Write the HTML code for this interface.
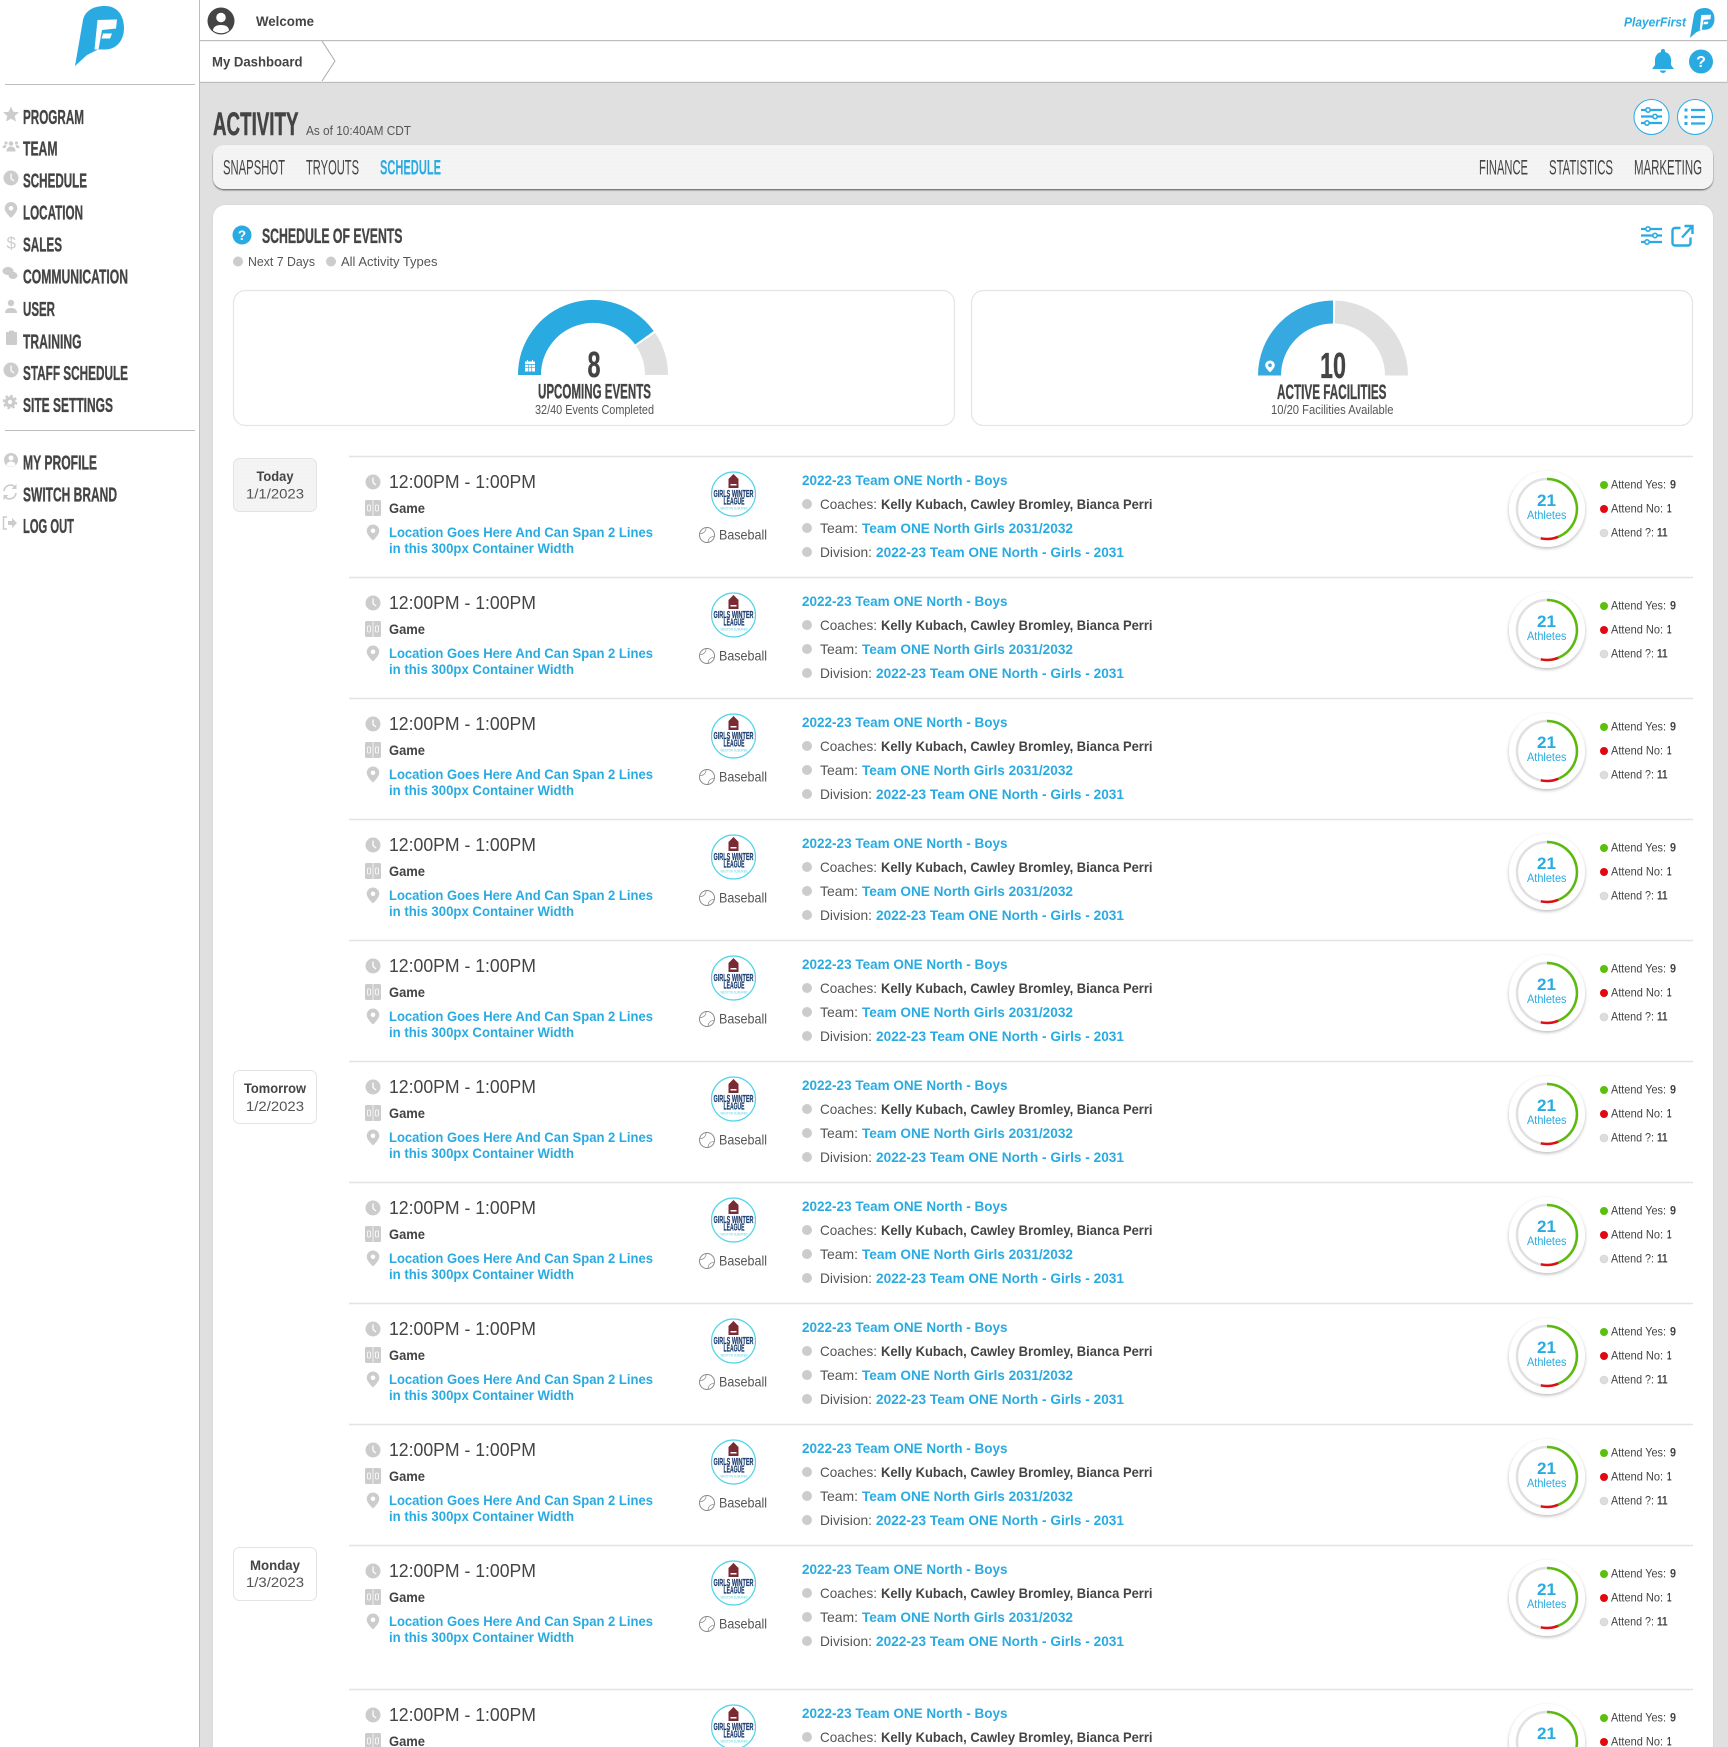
<!DOCTYPE html>
<html lang="en">
<head>
<meta charset="utf-8">
<title>PlayerFirst - Activity Schedule</title>
<style>
html,body{margin:0;padding:0;background:#e0e0e0}
svg{display:block}
text{font-family:"Liberation Sans",Arial,sans-serif;white-space:pre}
.d{font-family:"Liberation Sans Narrow","Liberation Sans",sans-serif;font-weight:700;fill:#444;stroke:#444;stroke-width:.35px}
.s{font-size:20.5px}
.tab{font-family:"Liberation Sans Narrow","Liberation Sans",sans-serif;font-size:21px;fill:#444}
.t{font-size:18.5px;fill:#444}
.g{font-size:14px;font-weight:700;fill:#444}
.l{font-size:14px;font-weight:700;fill:#29abe2}
.r{font-size:14px;fill:#555}
.n{font-size:12.5px;fill:#555}
.a{font-size:12px;fill:#444}
.ab{font-size:12px;font-weight:700;fill:#444}
.lg{font-family:"Liberation Sans Narrow","Liberation Sans",sans-serif;font-weight:700;font-size:10px;fill:#1d3f72;stroke:#1d3f72;stroke-width:.2px}
.lw{font-size:4px;fill:#5cd0e8}
.c{fill:#ccc}
.ln{stroke:#e3e3e3;stroke-width:1.4}
</style>
</head>
<body>
<svg xmlns="http://www.w3.org/2000/svg" width="1728" height="1747" viewBox="0 0 1728 1747">
<defs>
<pattern id="dots" width="4" height="4" patternUnits="userSpaceOnUse"><rect width="4" height="4" fill="#f4f4f4"/><rect x="1" y="1" width="1" height="1" fill="#ececec"/></pattern>
<filter id="sh" x="-20%" y="-20%" width="140%" height="140%"><feDropShadow dx="0" dy="1.5" stdDeviation="1.5" flood-color="#000" flood-opacity=".28"/></filter>
<filter id="tabsh" x="-2%" y="-20%" width="104%" height="150%"><feDropShadow dx="0" dy="1.2" stdDeviation=".8" flood-color="#000" flood-opacity=".55"/></filter>
<g id="logo">
<path fill="#29abe2" d="M75 66L83 20C85 11 93 6 105 6C117 6 124 15 124 28C124 41 116 49.500 105 49.500L98 49.500L87 55Z"/>
<path fill="#fff" d="M97.500 20L117 19.500L116 28.500L102 30L98.500 49.500L94.500 49.500ZM103 33.500L112 33.500L110 38.500L101.500 38.500Z"/>
</g>
<g id="filt" fill="none" stroke="#29abe2" stroke-width="2.200">
<path d="M0 0H21M0 6.500H21M0 13H21"/>
<circle cx="7" cy="0" r="2.200" fill="#fff" stroke-width="1.600"/><circle cx="14" cy="6.500" r="2.200" fill="#fff" stroke-width="1.600"/><circle cx="6" cy="13" r="2.200" fill="#fff" stroke-width="1.600"/>
</g>
<g id="clk"><circle r="7.500" cx="0" cy="0" fill="#ccc"/><path d="M0-4.500V.5L3 3" fill="none" stroke="#fff" stroke-width="1.300"/></g>
<path id="pinp" d="M0-8a6.300 6.300 0 0 0-6.300 6.300C-6.300 2.500 0 8 0 8S6.300 2.500 6.300-1.700A6.300 6.300 0 0 0 0-8ZM0 .6a2.300 2.300 0 1 1 0-4.600 2.300 2.300 0 0 1 0 4.600Z"/>
<g id="r">
<use href="#clk" x="373" y="26"/>
<rect x="365" y="44" width="16" height="16" rx="1.500" fill="#ccc"/><path d="M373 44V60" stroke="#fff" stroke-width=".7"/><rect x="367.500" y="49" width="3" height="6" rx="1" fill="none" stroke="#fff" stroke-width=".8"/><rect x="375.500" y="49" width="3" height="6" rx="1" fill="none" stroke="#fff" stroke-width=".8"/>
<use href="#pinp" x="373" y="76.500" fill="#ccc"/>
<circle cx="733.500" cy="38" r="22" fill="#fff" stroke="#52d4ea" stroke-width="1.200"/>
<path d="M733.500 18l5 5v9h-10v-9z" fill="#7a2a33"/><rect x="730.500" y="28" width="6" height="1.500" fill="#fff"/>
<circle cx="707" cy="79" r="7.500" fill="none" stroke="#888"/><path d="M706 71.700c.3 3-2 5.700-6 6M714 80.300c-3 .3-5.700 2-6 6" fill="none" stroke="#888" stroke-width=".7"/>
<circle cx="807" cy="48" r="5" class="c"/><circle cx="807" cy="72" r="5" class="c"/><circle cx="807" cy="96" r="5" class="c"/>
<circle cx="1547" cy="53" r="38" fill="#fff" filter="url(#sh)"/>
<circle cx="1547" cy="53" r="30" fill="none" stroke="#e0e0e0" stroke-width="2.500"/>
<path d="M1547 23A30 30 0 0 1 1558.200 80.800" fill="none" stroke="#5cb90d" stroke-width="2.500"/>
<path d="M1558.200 80.800A30 30 0 0 1 1540.800 82.300" fill="none" stroke="#e00d12" stroke-width="2.500"/>
<circle cx="1604" cy="29" r="4" fill="#5cbf0a"/><circle cx="1604" cy="53" r="4" fill="#e0090f"/><circle cx="1604" cy="77" r="4" fill="#ddd" stroke="#d0d0d0" stroke-width=".6"/>
</g>
</defs>

<rect width="1728" height="1747" fill="#e0e0e0"/>

<!-- sidebar -->
<rect width="199" height="1747" fill="#fff"/>
<rect x="199" width="1" height="1747" fill="#bdbdbd"/>
<use href="#logo"/>
<rect x="5" y="84" width="190" height="1" fill="#bdbdbd"/>
<rect x="5" y="430" width="190" height="1" fill="#bdbdbd"/>

<polygon class="c" points="11,106.500 13.300,111.700 19,112.300 14.700,116 16,121.500 11,118.700 6,121.500 7.300,116 3,112.300 8.700,111.700"/>
<g class="c"><circle cx="11" cy="143.500" r="2.300"/><path d="M6.500 151.500c0-3.500 2-5 4.500-5s4.500 1.500 4.500 5z"/><circle cx="6" cy="143" r="1.600"/><circle cx="16.500" cy="143" r="1.600"/><path d="M2.500 148c0-2 1.300-3 2.700-3h1.300l-1 3zM19.500 148c0-2-1.300-3-2.700-3h-1.300l1 3z"/></g>
<use href="#clk" x="11" y="178"/>
<use href="#pinp" x="11" y="210" class="c"/>
<text x="6.500" y="248.500" font-size="17" fill="#ccc">$</text>
<g class="c"><ellipse cx="8" cy="271" rx="5.500" ry="4"/><ellipse cx="13" cy="275.500" rx="4.500" ry="3.600"/></g>
<g class="c"><circle cx="11" cy="303" r="3.200"/><path d="M5 313c0-4 3-5 6-5s6 1 6 5z"/></g>
<g class="c"><rect x="6" y="332" width="11" height="13" rx="1"/><rect x="9" y="330.500" width="5" height="3" rx="1"/></g>
<use href="#clk" x="11" y="370"/>
<g fill="none" stroke="#ccc"><circle cx="10" cy="402" r="3.800" stroke-width="3.400"/><circle cx="10" cy="402" r="6.200" stroke-width="2.200" stroke-dasharray="2.500 2.370"/></g>
<circle cx="11" cy="460" r="7" class="c"/><circle cx="11" cy="458" r="2.500" fill="#fff"/><path d="M6.500 465c.5-2.500 2.500-3.500 4.500-3.500s4 1 4.500 3.500c-1 1-2.700 1.800-4.500 1.800s-3.500-.8-4.500-1.800z" fill="#fff"/>
<g fill="none" stroke="#ccc" stroke-width="1.600"><path d="M4 491a6.500 6.500 0 0 1 11-4M16 493a6.500 6.500 0 0 1-11 4"/></g><path class="c" d="M16.500 484v5h-5zM3.500 500v-5h5z"/>
<path d="M7 517h-3.500v12H7" fill="none" stroke="#ccc" stroke-width="1.500"/><path class="c" d="M8 521h4v-3l5 5-5 5v-3H8z"/>

<text class="d s" x="23" y="124" textLength="61" lengthAdjust="spacingAndGlyphs">PROGRAM</text>
<text class="d s" x="23" y="155.500" textLength="34.500" lengthAdjust="spacingAndGlyphs">TEAM</text>
<text class="d s" x="23" y="187.500" textLength="64" lengthAdjust="spacingAndGlyphs">SCHEDULE</text>
<text class="d s" x="23" y="219.500" textLength="60" lengthAdjust="spacingAndGlyphs">LOCATION</text>
<text class="d s" x="23" y="251.500" textLength="39" lengthAdjust="spacingAndGlyphs">SALES</text>
<text class="d s" x="23" y="283.500" textLength="105" lengthAdjust="spacingAndGlyphs">COMMUNICATION</text>
<text class="d s" x="23" y="316" textLength="32" lengthAdjust="spacingAndGlyphs">USER</text>
<text class="d s" x="23" y="348.500" textLength="58.500" lengthAdjust="spacingAndGlyphs">TRAINING</text>
<text class="d s" x="23" y="380" textLength="105" lengthAdjust="spacingAndGlyphs">STAFF SCHEDULE</text>
<text class="d s" x="23" y="412" textLength="90" lengthAdjust="spacingAndGlyphs">SITE SETTINGS</text>
<text class="d s" x="23" y="469.500" textLength="74" lengthAdjust="spacingAndGlyphs">MY PROFILE</text>
<text class="d s" x="23" y="501.500" textLength="94" lengthAdjust="spacingAndGlyphs">SWITCH BRAND</text>
<text class="d s" x="23" y="533" textLength="51" lengthAdjust="spacingAndGlyphs">LOG OUT</text>

<!-- header -->
<rect x="200" width="1527" height="82" fill="#fff"/>
<rect x="1727" width="1" height="83" fill="#ccc"/>
<rect x="200" y="40" width="1527" height="1.200" fill="#bdbdbd"/>
<rect x="200" y="81.800" width="1527" height="1.200" fill="#bdbdbd"/>
<circle cx="221" cy="21" r="13.500" fill="#444"/><circle cx="221" cy="17.500" r="4.800" fill="#fff"/><path d="M213 30.500c0-4 4-5.500 8-5.500s8 1.500 8 5.500c-2 1.800-5 2.700-8 2.700s-6-.9-8-2.700z" fill="#fff"/>
<text class="g" x="256" y="26" textLength="58" lengthAdjust="spacingAndGlyphs">Welcome</text>
<text class="g" x="212" y="66.500" textLength="90.500" lengthAdjust="spacingAndGlyphs">My Dashboard</text>
<path d="M322 41L335 61L322 81" fill="none" stroke="#aaa" stroke-width="1"/>
<text x="1624" y="26.500" font-size="13" font-weight="700" font-style="italic" fill="#29abe2" textLength="62" lengthAdjust="spacingAndGlyphs">PlayerFirst</text>
<use href="#logo" transform="translate(1652.500 5) scale(.5)"/>
<path fill="#29abe2" d="M1663 49a2 2 0 0 1 2 2v1c4 1 6 4.500 6 8v5l3 4h-22l3-4v-5c0-3.500 2-7 6-8v-1a2 2 0 0 1 2-2zM1660 70.500h6a3 2.500 0 0 1-6 0z"/>
<circle cx="1701" cy="61.500" r="12" fill="#29abe2"/><text x="1701" y="67" font-size="16" font-weight="700" fill="#fff" text-anchor="middle">?</text>

<!-- activity head -->
<text class="d" x="213" y="135" font-size="32" style="stroke-width:.5px" textLength="85.500" lengthAdjust="spacingAndGlyphs">ACTIVITY</text>
<text x="306" y="135" font-size="12.500" fill="#555" textLength="105" lengthAdjust="spacingAndGlyphs">As of 10:40AM CDT</text>
<circle cx="1651.500" cy="117" r="17.500" fill="#fff" stroke="#29abe2" stroke-width="1"/>
<use href="#filt" x="1641" y="110"/>
<circle cx="1695" cy="117" r="17.500" fill="#fff" stroke="#29abe2" stroke-width="1"/>
<path d="M1691 110H1705M1691 117H1705M1691 123.500H1705" stroke="#29abe2" stroke-width="2.200"/><path d="M1684.500 108.500h3v3h-3zM1684.500 115.500h3v3h-3zM1684.500 122h3v3h-3z" fill="#29abe2"/>

<!-- tabs -->
<rect x="213" y="145" width="1500" height="44" rx="11" fill="url(#dots)" filter="url(#tabsh)"/>
<text class="tab" x="223" y="174.500" textLength="62" lengthAdjust="spacingAndGlyphs">SNAPSHOT</text>
<text class="tab" x="306" y="174.500" textLength="53" lengthAdjust="spacingAndGlyphs">TRYOUTS</text>
<text class="tab" x="380" y="174.500" font-weight="700" style="fill:#29abe2" textLength="61" lengthAdjust="spacingAndGlyphs">SCHEDULE</text>
<text class="tab" x="1479" y="174.500" textLength="49" lengthAdjust="spacingAndGlyphs">FINANCE</text>
<text class="tab" x="1549" y="174.500" textLength="64" lengthAdjust="spacingAndGlyphs">STATISTICS</text>
<text class="tab" x="1634" y="174.500" textLength="68" lengthAdjust="spacingAndGlyphs">MARKETING</text>

<!-- card -->
<rect x="212.500" y="204.500" width="1501" height="1600" rx="12" fill="#d2d2d2"/>
<rect x="213" y="205" width="1500" height="1600" rx="12" fill="#fff"/>
<circle cx="242" cy="235" r="9.500" fill="#29abe2"/><text x="242" y="240" font-size="13.500" font-weight="700" fill="#fff" text-anchor="middle">?</text>
<text class="d" x="262" y="243" font-size="21" textLength="140.500" lengthAdjust="spacingAndGlyphs">SCHEDULE OF EVENTS</text>
<circle cx="238" cy="261.500" r="5" class="c"/>
<text class="n" x="248" y="266" textLength="67" lengthAdjust="spacingAndGlyphs">Next 7 Days</text>
<circle cx="331" cy="261.500" r="5" class="c"/>
<text class="n" x="341" y="266" textLength="96.500" lengthAdjust="spacingAndGlyphs">All Activity Types</text>
<use href="#filt" x="1641" y="229"/>
<path d="M1680.500 228h-5.500a2.500 2.500 0 0 0-2.500 2.500v12.500a2.500 2.500 0 0 0 2.500 2.500h13a2.500 2.500 0 0 0 2.500-2.500v-5.500M1682 237.500l10-11M1684.500 226h8v8" fill="none" stroke="#29abe2" stroke-width="2.400"/>

<!-- gauges -->
<rect x="233.500" y="290.500" width="721" height="135" rx="12" fill="#fff" stroke="#e5e5e5" stroke-width="1.200"/>
<rect x="971.500" y="290.500" width="721" height="135" rx="12" fill="#fff" stroke="#e5e5e5" stroke-width="1.200"/>
<path d="M529.500 375A63.500 63.500 0 0 1 644.400 337.700" fill="none" stroke="#29abe2" stroke-width="23"/>
<path d="M645.600 339.400A63.500 63.500 0 0 1 656.500 375" fill="none" stroke="#e0e0e0" stroke-width="23"/>
<rect x="525" y="361.500" width="10" height="10" fill="#fff"/><path d="M525 364.500h10M525 367.300h10M528.300 364.500v7M531.700 364.500v7" stroke="#29abe2" stroke-width=".7"/><path d="M527.500 360v2.500M532.500 360v2.500" stroke="#fff" stroke-width="1"/>
<text class="d" x="587.500" y="377" font-size="36" textLength="13" lengthAdjust="spacingAndGlyphs">8</text>
<text class="d" x="538" y="398.500" font-size="21" textLength="113" lengthAdjust="spacingAndGlyphs">UPCOMING EVENTS</text>
<text class="n" x="535" y="414" textLength="119" lengthAdjust="spacingAndGlyphs">32/40 Events Completed</text>

<path d="M1269.500 375.500A63.500 63.500 0 0 1 1333 312" fill="none" stroke="#36a9e1" stroke-width="23"/>
<path d="M1335 312A63.500 63.500 0 0 1 1396.500 375.500" fill="none" stroke="#e0e0e0" stroke-width="23"/>
<path d="M1270 360.500a4.800 4.800 0 0 0-4.800 4.800c0 3 4.800 7 4.800 7s4.800-4 4.800-7a4.800 4.800 0 0 0-4.800-4.800zM1270 367a1.800 1.800 0 1 1 0-3.600 1.800 1.800 0 0 1 0 3.600z" fill="#fff"/>
<text class="d" x="1320" y="378" font-size="36" textLength="26" lengthAdjust="spacingAndGlyphs">10</text>
<text class="d" x="1277" y="399" font-size="21" textLength="109.500" lengthAdjust="spacingAndGlyphs">ACTIVE FACILITIES</text>
<text class="n" x="1271" y="414" textLength="122.500" lengthAdjust="spacingAndGlyphs">10/20 Facilities Available</text>

<!-- date boxes -->
<rect x="233.500" y="458.500" width="83" height="53" rx="6" fill="url(#dots)" stroke="#e3e3e3"/>
<text class="g" x="256.500" y="481" textLength="37" lengthAdjust="spacingAndGlyphs">Today</text>
<text class="r" x="246" y="498.500" textLength="58" lengthAdjust="spacingAndGlyphs">1/1/2023</text>
<rect x="233.500" y="1070.500" width="83" height="53" rx="6" fill="#fff" stroke="#e3e3e3"/>
<text class="g" x="244" y="1093" textLength="62" lengthAdjust="spacingAndGlyphs">Tomorrow</text>
<text class="r" x="246" y="1111" textLength="58" lengthAdjust="spacingAndGlyphs">1/2/2023</text>
<rect x="233.500" y="1547.500" width="83" height="53" rx="6" fill="#fff" stroke="#e3e3e3"/>
<text class="g" x="250" y="1570" textLength="50" lengthAdjust="spacingAndGlyphs">Monday</text>
<text class="r" x="246" y="1587" textLength="58" lengthAdjust="spacingAndGlyphs">1/3/2023</text>

<!-- rows -->
<g transform="translate(0 456)"><line class="ln" x1="349" x2="1693" y1=".5" y2=".5"/><use href="#r"/>
<text class="t" x="389" y="32" textLength="147" lengthAdjust="spacingAndGlyphs">12:00PM - 1:00PM</text>
<text class="g" x="389" y="57" textLength="36" lengthAdjust="spacingAndGlyphs">Game</text>
<text class="l" x="389" y="81" textLength="264" lengthAdjust="spacingAndGlyphs">Location Goes Here And Can Span 2 Lines</text>
<text class="l" x="389" y="97" textLength="185" lengthAdjust="spacingAndGlyphs">in this 300px Container Width</text>
<text class="lg" x="713.500" y="41" textLength="40" lengthAdjust="spacingAndGlyphs">GIRLS WINTER</text>
<text class="lg" x="723.500" y="48.500" textLength="21" lengthAdjust="spacingAndGlyphs">LEAGUE</text>
<text class="lw" x="720.500" y="53.500" textLength="27" lengthAdjust="spacingAndGlyphs">WESTON SUBURBS</text>
<text class="r" x="719" y="83.500" textLength="48" lengthAdjust="spacingAndGlyphs">Baseball</text>
<text class="l" x="802" y="29" textLength="205.500" lengthAdjust="spacingAndGlyphs">2022-23 Team ONE North - Boys</text>
<text class="r" x="820" y="53" textLength="57" lengthAdjust="spacingAndGlyphs">Coaches:</text>
<text class="g" x="881" y="53" textLength="271.500" lengthAdjust="spacingAndGlyphs">Kelly Kubach, Cawley Bromley, Bianca Perri</text>
<text class="r" x="820" y="77" textLength="38" lengthAdjust="spacingAndGlyphs">Team:</text>
<text class="l" x="862" y="77" textLength="211" lengthAdjust="spacingAndGlyphs">Team ONE North Girls 2031/2032</text>
<text class="r" x="820" y="101" textLength="52" lengthAdjust="spacingAndGlyphs">Division:</text>
<text class="l" x="876" y="101" textLength="248" lengthAdjust="spacingAndGlyphs">2022-23 Team ONE North - Girls - 2031</text>
<text x="1537" y="50" font-size="17" font-weight="700" fill="#29abe2" textLength="19" lengthAdjust="spacingAndGlyphs">21</text>
<text x="1527" y="63" font-size="12" fill="#29abe2" textLength="39.500" lengthAdjust="spacingAndGlyphs">Athletes</text>
<text class="a" x="1611" y="32.500" textLength="55" lengthAdjust="spacingAndGlyphs">Attend Yes:</text><text class="ab" x="1670" y="32.500" textLength="6" lengthAdjust="spacingAndGlyphs">9</text>
<text class="a" x="1611" y="56.500" textLength="52" lengthAdjust="spacingAndGlyphs">Attend No:</text><text class="ab" x="1667" y="56.500" textLength="4.500" lengthAdjust="spacingAndGlyphs">1</text>
<text class="a" x="1611" y="80.500" textLength="43" lengthAdjust="spacingAndGlyphs">Attend ?:</text><text class="ab" x="1657" y="80.500" textLength="10.500" lengthAdjust="spacingAndGlyphs">11</text></g>

<g transform="translate(0 577)"><line class="ln" x1="349" x2="1693" y1=".5" y2=".5"/><use href="#r"/>
<text class="t" x="389" y="32" textLength="147" lengthAdjust="spacingAndGlyphs">12:00PM - 1:00PM</text>
<text class="g" x="389" y="57" textLength="36" lengthAdjust="spacingAndGlyphs">Game</text>
<text class="l" x="389" y="81" textLength="264" lengthAdjust="spacingAndGlyphs">Location Goes Here And Can Span 2 Lines</text>
<text class="l" x="389" y="97" textLength="185" lengthAdjust="spacingAndGlyphs">in this 300px Container Width</text>
<text class="lg" x="713.500" y="41" textLength="40" lengthAdjust="spacingAndGlyphs">GIRLS WINTER</text>
<text class="lg" x="723.500" y="48.500" textLength="21" lengthAdjust="spacingAndGlyphs">LEAGUE</text>
<text class="lw" x="720.500" y="53.500" textLength="27" lengthAdjust="spacingAndGlyphs">WESTON SUBURBS</text>
<text class="r" x="719" y="83.500" textLength="48" lengthAdjust="spacingAndGlyphs">Baseball</text>
<text class="l" x="802" y="29" textLength="205.500" lengthAdjust="spacingAndGlyphs">2022-23 Team ONE North - Boys</text>
<text class="r" x="820" y="53" textLength="57" lengthAdjust="spacingAndGlyphs">Coaches:</text>
<text class="g" x="881" y="53" textLength="271.500" lengthAdjust="spacingAndGlyphs">Kelly Kubach, Cawley Bromley, Bianca Perri</text>
<text class="r" x="820" y="77" textLength="38" lengthAdjust="spacingAndGlyphs">Team:</text>
<text class="l" x="862" y="77" textLength="211" lengthAdjust="spacingAndGlyphs">Team ONE North Girls 2031/2032</text>
<text class="r" x="820" y="101" textLength="52" lengthAdjust="spacingAndGlyphs">Division:</text>
<text class="l" x="876" y="101" textLength="248" lengthAdjust="spacingAndGlyphs">2022-23 Team ONE North - Girls - 2031</text>
<text x="1537" y="50" font-size="17" font-weight="700" fill="#29abe2" textLength="19" lengthAdjust="spacingAndGlyphs">21</text>
<text x="1527" y="63" font-size="12" fill="#29abe2" textLength="39.500" lengthAdjust="spacingAndGlyphs">Athletes</text>
<text class="a" x="1611" y="32.500" textLength="55" lengthAdjust="spacingAndGlyphs">Attend Yes:</text><text class="ab" x="1670" y="32.500" textLength="6" lengthAdjust="spacingAndGlyphs">9</text>
<text class="a" x="1611" y="56.500" textLength="52" lengthAdjust="spacingAndGlyphs">Attend No:</text><text class="ab" x="1667" y="56.500" textLength="4.500" lengthAdjust="spacingAndGlyphs">1</text>
<text class="a" x="1611" y="80.500" textLength="43" lengthAdjust="spacingAndGlyphs">Attend ?:</text><text class="ab" x="1657" y="80.500" textLength="10.500" lengthAdjust="spacingAndGlyphs">11</text></g>

<g transform="translate(0 698)"><line class="ln" x1="349" x2="1693" y1=".5" y2=".5"/><use href="#r"/>
<text class="t" x="389" y="32" textLength="147" lengthAdjust="spacingAndGlyphs">12:00PM - 1:00PM</text>
<text class="g" x="389" y="57" textLength="36" lengthAdjust="spacingAndGlyphs">Game</text>
<text class="l" x="389" y="81" textLength="264" lengthAdjust="spacingAndGlyphs">Location Goes Here And Can Span 2 Lines</text>
<text class="l" x="389" y="97" textLength="185" lengthAdjust="spacingAndGlyphs">in this 300px Container Width</text>
<text class="lg" x="713.500" y="41" textLength="40" lengthAdjust="spacingAndGlyphs">GIRLS WINTER</text>
<text class="lg" x="723.500" y="48.500" textLength="21" lengthAdjust="spacingAndGlyphs">LEAGUE</text>
<text class="lw" x="720.500" y="53.500" textLength="27" lengthAdjust="spacingAndGlyphs">WESTON SUBURBS</text>
<text class="r" x="719" y="83.500" textLength="48" lengthAdjust="spacingAndGlyphs">Baseball</text>
<text class="l" x="802" y="29" textLength="205.500" lengthAdjust="spacingAndGlyphs">2022-23 Team ONE North - Boys</text>
<text class="r" x="820" y="53" textLength="57" lengthAdjust="spacingAndGlyphs">Coaches:</text>
<text class="g" x="881" y="53" textLength="271.500" lengthAdjust="spacingAndGlyphs">Kelly Kubach, Cawley Bromley, Bianca Perri</text>
<text class="r" x="820" y="77" textLength="38" lengthAdjust="spacingAndGlyphs">Team:</text>
<text class="l" x="862" y="77" textLength="211" lengthAdjust="spacingAndGlyphs">Team ONE North Girls 2031/2032</text>
<text class="r" x="820" y="101" textLength="52" lengthAdjust="spacingAndGlyphs">Division:</text>
<text class="l" x="876" y="101" textLength="248" lengthAdjust="spacingAndGlyphs">2022-23 Team ONE North - Girls - 2031</text>
<text x="1537" y="50" font-size="17" font-weight="700" fill="#29abe2" textLength="19" lengthAdjust="spacingAndGlyphs">21</text>
<text x="1527" y="63" font-size="12" fill="#29abe2" textLength="39.500" lengthAdjust="spacingAndGlyphs">Athletes</text>
<text class="a" x="1611" y="32.500" textLength="55" lengthAdjust="spacingAndGlyphs">Attend Yes:</text><text class="ab" x="1670" y="32.500" textLength="6" lengthAdjust="spacingAndGlyphs">9</text>
<text class="a" x="1611" y="56.500" textLength="52" lengthAdjust="spacingAndGlyphs">Attend No:</text><text class="ab" x="1667" y="56.500" textLength="4.500" lengthAdjust="spacingAndGlyphs">1</text>
<text class="a" x="1611" y="80.500" textLength="43" lengthAdjust="spacingAndGlyphs">Attend ?:</text><text class="ab" x="1657" y="80.500" textLength="10.500" lengthAdjust="spacingAndGlyphs">11</text></g>

<g transform="translate(0 819)"><line class="ln" x1="349" x2="1693" y1=".5" y2=".5"/><use href="#r"/>
<text class="t" x="389" y="32" textLength="147" lengthAdjust="spacingAndGlyphs">12:00PM - 1:00PM</text>
<text class="g" x="389" y="57" textLength="36" lengthAdjust="spacingAndGlyphs">Game</text>
<text class="l" x="389" y="81" textLength="264" lengthAdjust="spacingAndGlyphs">Location Goes Here And Can Span 2 Lines</text>
<text class="l" x="389" y="97" textLength="185" lengthAdjust="spacingAndGlyphs">in this 300px Container Width</text>
<text class="lg" x="713.500" y="41" textLength="40" lengthAdjust="spacingAndGlyphs">GIRLS WINTER</text>
<text class="lg" x="723.500" y="48.500" textLength="21" lengthAdjust="spacingAndGlyphs">LEAGUE</text>
<text class="lw" x="720.500" y="53.500" textLength="27" lengthAdjust="spacingAndGlyphs">WESTON SUBURBS</text>
<text class="r" x="719" y="83.500" textLength="48" lengthAdjust="spacingAndGlyphs">Baseball</text>
<text class="l" x="802" y="29" textLength="205.500" lengthAdjust="spacingAndGlyphs">2022-23 Team ONE North - Boys</text>
<text class="r" x="820" y="53" textLength="57" lengthAdjust="spacingAndGlyphs">Coaches:</text>
<text class="g" x="881" y="53" textLength="271.500" lengthAdjust="spacingAndGlyphs">Kelly Kubach, Cawley Bromley, Bianca Perri</text>
<text class="r" x="820" y="77" textLength="38" lengthAdjust="spacingAndGlyphs">Team:</text>
<text class="l" x="862" y="77" textLength="211" lengthAdjust="spacingAndGlyphs">Team ONE North Girls 2031/2032</text>
<text class="r" x="820" y="101" textLength="52" lengthAdjust="spacingAndGlyphs">Division:</text>
<text class="l" x="876" y="101" textLength="248" lengthAdjust="spacingAndGlyphs">2022-23 Team ONE North - Girls - 2031</text>
<text x="1537" y="50" font-size="17" font-weight="700" fill="#29abe2" textLength="19" lengthAdjust="spacingAndGlyphs">21</text>
<text x="1527" y="63" font-size="12" fill="#29abe2" textLength="39.500" lengthAdjust="spacingAndGlyphs">Athletes</text>
<text class="a" x="1611" y="32.500" textLength="55" lengthAdjust="spacingAndGlyphs">Attend Yes:</text><text class="ab" x="1670" y="32.500" textLength="6" lengthAdjust="spacingAndGlyphs">9</text>
<text class="a" x="1611" y="56.500" textLength="52" lengthAdjust="spacingAndGlyphs">Attend No:</text><text class="ab" x="1667" y="56.500" textLength="4.500" lengthAdjust="spacingAndGlyphs">1</text>
<text class="a" x="1611" y="80.500" textLength="43" lengthAdjust="spacingAndGlyphs">Attend ?:</text><text class="ab" x="1657" y="80.500" textLength="10.500" lengthAdjust="spacingAndGlyphs">11</text></g>

<g transform="translate(0 940)"><line class="ln" x1="349" x2="1693" y1=".5" y2=".5"/><use href="#r"/>
<text class="t" x="389" y="32" textLength="147" lengthAdjust="spacingAndGlyphs">12:00PM - 1:00PM</text>
<text class="g" x="389" y="57" textLength="36" lengthAdjust="spacingAndGlyphs">Game</text>
<text class="l" x="389" y="81" textLength="264" lengthAdjust="spacingAndGlyphs">Location Goes Here And Can Span 2 Lines</text>
<text class="l" x="389" y="97" textLength="185" lengthAdjust="spacingAndGlyphs">in this 300px Container Width</text>
<text class="lg" x="713.500" y="41" textLength="40" lengthAdjust="spacingAndGlyphs">GIRLS WINTER</text>
<text class="lg" x="723.500" y="48.500" textLength="21" lengthAdjust="spacingAndGlyphs">LEAGUE</text>
<text class="lw" x="720.500" y="53.500" textLength="27" lengthAdjust="spacingAndGlyphs">WESTON SUBURBS</text>
<text class="r" x="719" y="83.500" textLength="48" lengthAdjust="spacingAndGlyphs">Baseball</text>
<text class="l" x="802" y="29" textLength="205.500" lengthAdjust="spacingAndGlyphs">2022-23 Team ONE North - Boys</text>
<text class="r" x="820" y="53" textLength="57" lengthAdjust="spacingAndGlyphs">Coaches:</text>
<text class="g" x="881" y="53" textLength="271.500" lengthAdjust="spacingAndGlyphs">Kelly Kubach, Cawley Bromley, Bianca Perri</text>
<text class="r" x="820" y="77" textLength="38" lengthAdjust="spacingAndGlyphs">Team:</text>
<text class="l" x="862" y="77" textLength="211" lengthAdjust="spacingAndGlyphs">Team ONE North Girls 2031/2032</text>
<text class="r" x="820" y="101" textLength="52" lengthAdjust="spacingAndGlyphs">Division:</text>
<text class="l" x="876" y="101" textLength="248" lengthAdjust="spacingAndGlyphs">2022-23 Team ONE North - Girls - 2031</text>
<text x="1537" y="50" font-size="17" font-weight="700" fill="#29abe2" textLength="19" lengthAdjust="spacingAndGlyphs">21</text>
<text x="1527" y="63" font-size="12" fill="#29abe2" textLength="39.500" lengthAdjust="spacingAndGlyphs">Athletes</text>
<text class="a" x="1611" y="32.500" textLength="55" lengthAdjust="spacingAndGlyphs">Attend Yes:</text><text class="ab" x="1670" y="32.500" textLength="6" lengthAdjust="spacingAndGlyphs">9</text>
<text class="a" x="1611" y="56.500" textLength="52" lengthAdjust="spacingAndGlyphs">Attend No:</text><text class="ab" x="1667" y="56.500" textLength="4.500" lengthAdjust="spacingAndGlyphs">1</text>
<text class="a" x="1611" y="80.500" textLength="43" lengthAdjust="spacingAndGlyphs">Attend ?:</text><text class="ab" x="1657" y="80.500" textLength="10.500" lengthAdjust="spacingAndGlyphs">11</text></g>

<g transform="translate(0 1061)"><line class="ln" x1="349" x2="1693" y1=".5" y2=".5"/><use href="#r"/>
<text class="t" x="389" y="32" textLength="147" lengthAdjust="spacingAndGlyphs">12:00PM - 1:00PM</text>
<text class="g" x="389" y="57" textLength="36" lengthAdjust="spacingAndGlyphs">Game</text>
<text class="l" x="389" y="81" textLength="264" lengthAdjust="spacingAndGlyphs">Location Goes Here And Can Span 2 Lines</text>
<text class="l" x="389" y="97" textLength="185" lengthAdjust="spacingAndGlyphs">in this 300px Container Width</text>
<text class="lg" x="713.500" y="41" textLength="40" lengthAdjust="spacingAndGlyphs">GIRLS WINTER</text>
<text class="lg" x="723.500" y="48.500" textLength="21" lengthAdjust="spacingAndGlyphs">LEAGUE</text>
<text class="lw" x="720.500" y="53.500" textLength="27" lengthAdjust="spacingAndGlyphs">WESTON SUBURBS</text>
<text class="r" x="719" y="83.500" textLength="48" lengthAdjust="spacingAndGlyphs">Baseball</text>
<text class="l" x="802" y="29" textLength="205.500" lengthAdjust="spacingAndGlyphs">2022-23 Team ONE North - Boys</text>
<text class="r" x="820" y="53" textLength="57" lengthAdjust="spacingAndGlyphs">Coaches:</text>
<text class="g" x="881" y="53" textLength="271.500" lengthAdjust="spacingAndGlyphs">Kelly Kubach, Cawley Bromley, Bianca Perri</text>
<text class="r" x="820" y="77" textLength="38" lengthAdjust="spacingAndGlyphs">Team:</text>
<text class="l" x="862" y="77" textLength="211" lengthAdjust="spacingAndGlyphs">Team ONE North Girls 2031/2032</text>
<text class="r" x="820" y="101" textLength="52" lengthAdjust="spacingAndGlyphs">Division:</text>
<text class="l" x="876" y="101" textLength="248" lengthAdjust="spacingAndGlyphs">2022-23 Team ONE North - Girls - 2031</text>
<text x="1537" y="50" font-size="17" font-weight="700" fill="#29abe2" textLength="19" lengthAdjust="spacingAndGlyphs">21</text>
<text x="1527" y="63" font-size="12" fill="#29abe2" textLength="39.500" lengthAdjust="spacingAndGlyphs">Athletes</text>
<text class="a" x="1611" y="32.500" textLength="55" lengthAdjust="spacingAndGlyphs">Attend Yes:</text><text class="ab" x="1670" y="32.500" textLength="6" lengthAdjust="spacingAndGlyphs">9</text>
<text class="a" x="1611" y="56.500" textLength="52" lengthAdjust="spacingAndGlyphs">Attend No:</text><text class="ab" x="1667" y="56.500" textLength="4.500" lengthAdjust="spacingAndGlyphs">1</text>
<text class="a" x="1611" y="80.500" textLength="43" lengthAdjust="spacingAndGlyphs">Attend ?:</text><text class="ab" x="1657" y="80.500" textLength="10.500" lengthAdjust="spacingAndGlyphs">11</text></g>

<g transform="translate(0 1182)"><line class="ln" x1="349" x2="1693" y1=".5" y2=".5"/><use href="#r"/>
<text class="t" x="389" y="32" textLength="147" lengthAdjust="spacingAndGlyphs">12:00PM - 1:00PM</text>
<text class="g" x="389" y="57" textLength="36" lengthAdjust="spacingAndGlyphs">Game</text>
<text class="l" x="389" y="81" textLength="264" lengthAdjust="spacingAndGlyphs">Location Goes Here And Can Span 2 Lines</text>
<text class="l" x="389" y="97" textLength="185" lengthAdjust="spacingAndGlyphs">in this 300px Container Width</text>
<text class="lg" x="713.500" y="41" textLength="40" lengthAdjust="spacingAndGlyphs">GIRLS WINTER</text>
<text class="lg" x="723.500" y="48.500" textLength="21" lengthAdjust="spacingAndGlyphs">LEAGUE</text>
<text class="lw" x="720.500" y="53.500" textLength="27" lengthAdjust="spacingAndGlyphs">WESTON SUBURBS</text>
<text class="r" x="719" y="83.500" textLength="48" lengthAdjust="spacingAndGlyphs">Baseball</text>
<text class="l" x="802" y="29" textLength="205.500" lengthAdjust="spacingAndGlyphs">2022-23 Team ONE North - Boys</text>
<text class="r" x="820" y="53" textLength="57" lengthAdjust="spacingAndGlyphs">Coaches:</text>
<text class="g" x="881" y="53" textLength="271.500" lengthAdjust="spacingAndGlyphs">Kelly Kubach, Cawley Bromley, Bianca Perri</text>
<text class="r" x="820" y="77" textLength="38" lengthAdjust="spacingAndGlyphs">Team:</text>
<text class="l" x="862" y="77" textLength="211" lengthAdjust="spacingAndGlyphs">Team ONE North Girls 2031/2032</text>
<text class="r" x="820" y="101" textLength="52" lengthAdjust="spacingAndGlyphs">Division:</text>
<text class="l" x="876" y="101" textLength="248" lengthAdjust="spacingAndGlyphs">2022-23 Team ONE North - Girls - 2031</text>
<text x="1537" y="50" font-size="17" font-weight="700" fill="#29abe2" textLength="19" lengthAdjust="spacingAndGlyphs">21</text>
<text x="1527" y="63" font-size="12" fill="#29abe2" textLength="39.500" lengthAdjust="spacingAndGlyphs">Athletes</text>
<text class="a" x="1611" y="32.500" textLength="55" lengthAdjust="spacingAndGlyphs">Attend Yes:</text><text class="ab" x="1670" y="32.500" textLength="6" lengthAdjust="spacingAndGlyphs">9</text>
<text class="a" x="1611" y="56.500" textLength="52" lengthAdjust="spacingAndGlyphs">Attend No:</text><text class="ab" x="1667" y="56.500" textLength="4.500" lengthAdjust="spacingAndGlyphs">1</text>
<text class="a" x="1611" y="80.500" textLength="43" lengthAdjust="spacingAndGlyphs">Attend ?:</text><text class="ab" x="1657" y="80.500" textLength="10.500" lengthAdjust="spacingAndGlyphs">11</text></g>

<g transform="translate(0 1303)"><line class="ln" x1="349" x2="1693" y1=".5" y2=".5"/><use href="#r"/>
<text class="t" x="389" y="32" textLength="147" lengthAdjust="spacingAndGlyphs">12:00PM - 1:00PM</text>
<text class="g" x="389" y="57" textLength="36" lengthAdjust="spacingAndGlyphs">Game</text>
<text class="l" x="389" y="81" textLength="264" lengthAdjust="spacingAndGlyphs">Location Goes Here And Can Span 2 Lines</text>
<text class="l" x="389" y="97" textLength="185" lengthAdjust="spacingAndGlyphs">in this 300px Container Width</text>
<text class="lg" x="713.500" y="41" textLength="40" lengthAdjust="spacingAndGlyphs">GIRLS WINTER</text>
<text class="lg" x="723.500" y="48.500" textLength="21" lengthAdjust="spacingAndGlyphs">LEAGUE</text>
<text class="lw" x="720.500" y="53.500" textLength="27" lengthAdjust="spacingAndGlyphs">WESTON SUBURBS</text>
<text class="r" x="719" y="83.500" textLength="48" lengthAdjust="spacingAndGlyphs">Baseball</text>
<text class="l" x="802" y="29" textLength="205.500" lengthAdjust="spacingAndGlyphs">2022-23 Team ONE North - Boys</text>
<text class="r" x="820" y="53" textLength="57" lengthAdjust="spacingAndGlyphs">Coaches:</text>
<text class="g" x="881" y="53" textLength="271.500" lengthAdjust="spacingAndGlyphs">Kelly Kubach, Cawley Bromley, Bianca Perri</text>
<text class="r" x="820" y="77" textLength="38" lengthAdjust="spacingAndGlyphs">Team:</text>
<text class="l" x="862" y="77" textLength="211" lengthAdjust="spacingAndGlyphs">Team ONE North Girls 2031/2032</text>
<text class="r" x="820" y="101" textLength="52" lengthAdjust="spacingAndGlyphs">Division:</text>
<text class="l" x="876" y="101" textLength="248" lengthAdjust="spacingAndGlyphs">2022-23 Team ONE North - Girls - 2031</text>
<text x="1537" y="50" font-size="17" font-weight="700" fill="#29abe2" textLength="19" lengthAdjust="spacingAndGlyphs">21</text>
<text x="1527" y="63" font-size="12" fill="#29abe2" textLength="39.500" lengthAdjust="spacingAndGlyphs">Athletes</text>
<text class="a" x="1611" y="32.500" textLength="55" lengthAdjust="spacingAndGlyphs">Attend Yes:</text><text class="ab" x="1670" y="32.500" textLength="6" lengthAdjust="spacingAndGlyphs">9</text>
<text class="a" x="1611" y="56.500" textLength="52" lengthAdjust="spacingAndGlyphs">Attend No:</text><text class="ab" x="1667" y="56.500" textLength="4.500" lengthAdjust="spacingAndGlyphs">1</text>
<text class="a" x="1611" y="80.500" textLength="43" lengthAdjust="spacingAndGlyphs">Attend ?:</text><text class="ab" x="1657" y="80.500" textLength="10.500" lengthAdjust="spacingAndGlyphs">11</text></g>

<g transform="translate(0 1424)"><line class="ln" x1="349" x2="1693" y1=".5" y2=".5"/><use href="#r"/>
<text class="t" x="389" y="32" textLength="147" lengthAdjust="spacingAndGlyphs">12:00PM - 1:00PM</text>
<text class="g" x="389" y="57" textLength="36" lengthAdjust="spacingAndGlyphs">Game</text>
<text class="l" x="389" y="81" textLength="264" lengthAdjust="spacingAndGlyphs">Location Goes Here And Can Span 2 Lines</text>
<text class="l" x="389" y="97" textLength="185" lengthAdjust="spacingAndGlyphs">in this 300px Container Width</text>
<text class="lg" x="713.500" y="41" textLength="40" lengthAdjust="spacingAndGlyphs">GIRLS WINTER</text>
<text class="lg" x="723.500" y="48.500" textLength="21" lengthAdjust="spacingAndGlyphs">LEAGUE</text>
<text class="lw" x="720.500" y="53.500" textLength="27" lengthAdjust="spacingAndGlyphs">WESTON SUBURBS</text>
<text class="r" x="719" y="83.500" textLength="48" lengthAdjust="spacingAndGlyphs">Baseball</text>
<text class="l" x="802" y="29" textLength="205.500" lengthAdjust="spacingAndGlyphs">2022-23 Team ONE North - Boys</text>
<text class="r" x="820" y="53" textLength="57" lengthAdjust="spacingAndGlyphs">Coaches:</text>
<text class="g" x="881" y="53" textLength="271.500" lengthAdjust="spacingAndGlyphs">Kelly Kubach, Cawley Bromley, Bianca Perri</text>
<text class="r" x="820" y="77" textLength="38" lengthAdjust="spacingAndGlyphs">Team:</text>
<text class="l" x="862" y="77" textLength="211" lengthAdjust="spacingAndGlyphs">Team ONE North Girls 2031/2032</text>
<text class="r" x="820" y="101" textLength="52" lengthAdjust="spacingAndGlyphs">Division:</text>
<text class="l" x="876" y="101" textLength="248" lengthAdjust="spacingAndGlyphs">2022-23 Team ONE North - Girls - 2031</text>
<text x="1537" y="50" font-size="17" font-weight="700" fill="#29abe2" textLength="19" lengthAdjust="spacingAndGlyphs">21</text>
<text x="1527" y="63" font-size="12" fill="#29abe2" textLength="39.500" lengthAdjust="spacingAndGlyphs">Athletes</text>
<text class="a" x="1611" y="32.500" textLength="55" lengthAdjust="spacingAndGlyphs">Attend Yes:</text><text class="ab" x="1670" y="32.500" textLength="6" lengthAdjust="spacingAndGlyphs">9</text>
<text class="a" x="1611" y="56.500" textLength="52" lengthAdjust="spacingAndGlyphs">Attend No:</text><text class="ab" x="1667" y="56.500" textLength="4.500" lengthAdjust="spacingAndGlyphs">1</text>
<text class="a" x="1611" y="80.500" textLength="43" lengthAdjust="spacingAndGlyphs">Attend ?:</text><text class="ab" x="1657" y="80.500" textLength="10.500" lengthAdjust="spacingAndGlyphs">11</text></g>

<g transform="translate(0 1545)"><line class="ln" x1="349" x2="1693" y1=".5" y2=".5"/><use href="#r"/>
<text class="t" x="389" y="32" textLength="147" lengthAdjust="spacingAndGlyphs">12:00PM - 1:00PM</text>
<text class="g" x="389" y="57" textLength="36" lengthAdjust="spacingAndGlyphs">Game</text>
<text class="l" x="389" y="81" textLength="264" lengthAdjust="spacingAndGlyphs">Location Goes Here And Can Span 2 Lines</text>
<text class="l" x="389" y="97" textLength="185" lengthAdjust="spacingAndGlyphs">in this 300px Container Width</text>
<text class="lg" x="713.500" y="41" textLength="40" lengthAdjust="spacingAndGlyphs">GIRLS WINTER</text>
<text class="lg" x="723.500" y="48.500" textLength="21" lengthAdjust="spacingAndGlyphs">LEAGUE</text>
<text class="lw" x="720.500" y="53.500" textLength="27" lengthAdjust="spacingAndGlyphs">WESTON SUBURBS</text>
<text class="r" x="719" y="83.500" textLength="48" lengthAdjust="spacingAndGlyphs">Baseball</text>
<text class="l" x="802" y="29" textLength="205.500" lengthAdjust="spacingAndGlyphs">2022-23 Team ONE North - Boys</text>
<text class="r" x="820" y="53" textLength="57" lengthAdjust="spacingAndGlyphs">Coaches:</text>
<text class="g" x="881" y="53" textLength="271.500" lengthAdjust="spacingAndGlyphs">Kelly Kubach, Cawley Bromley, Bianca Perri</text>
<text class="r" x="820" y="77" textLength="38" lengthAdjust="spacingAndGlyphs">Team:</text>
<text class="l" x="862" y="77" textLength="211" lengthAdjust="spacingAndGlyphs">Team ONE North Girls 2031/2032</text>
<text class="r" x="820" y="101" textLength="52" lengthAdjust="spacingAndGlyphs">Division:</text>
<text class="l" x="876" y="101" textLength="248" lengthAdjust="spacingAndGlyphs">2022-23 Team ONE North - Girls - 2031</text>
<text x="1537" y="50" font-size="17" font-weight="700" fill="#29abe2" textLength="19" lengthAdjust="spacingAndGlyphs">21</text>
<text x="1527" y="63" font-size="12" fill="#29abe2" textLength="39.500" lengthAdjust="spacingAndGlyphs">Athletes</text>
<text class="a" x="1611" y="32.500" textLength="55" lengthAdjust="spacingAndGlyphs">Attend Yes:</text><text class="ab" x="1670" y="32.500" textLength="6" lengthAdjust="spacingAndGlyphs">9</text>
<text class="a" x="1611" y="56.500" textLength="52" lengthAdjust="spacingAndGlyphs">Attend No:</text><text class="ab" x="1667" y="56.500" textLength="4.500" lengthAdjust="spacingAndGlyphs">1</text>
<text class="a" x="1611" y="80.500" textLength="43" lengthAdjust="spacingAndGlyphs">Attend ?:</text><text class="ab" x="1657" y="80.500" textLength="10.500" lengthAdjust="spacingAndGlyphs">11</text></g>

<g transform="translate(0 1689)"><line class="ln" x1="349" x2="1693" y1=".5" y2=".5"/><use href="#r"/>
<text class="t" x="389" y="32" textLength="147" lengthAdjust="spacingAndGlyphs">12:00PM - 1:00PM</text>
<text class="g" x="389" y="57" textLength="36" lengthAdjust="spacingAndGlyphs">Game</text>
<text class="lg" x="713.500" y="41" textLength="40" lengthAdjust="spacingAndGlyphs">GIRLS WINTER</text>
<text class="lg" x="723.500" y="48.500" textLength="21" lengthAdjust="spacingAndGlyphs">LEAGUE</text>
<text class="lw" x="720.500" y="53.500" textLength="27" lengthAdjust="spacingAndGlyphs">WESTON SUBURBS</text>
<text class="l" x="802" y="29" textLength="205.500" lengthAdjust="spacingAndGlyphs">2022-23 Team ONE North - Boys</text>
<text class="r" x="820" y="53" textLength="57" lengthAdjust="spacingAndGlyphs">Coaches:</text>
<text class="g" x="881" y="53" textLength="271.500" lengthAdjust="spacingAndGlyphs">Kelly Kubach, Cawley Bromley, Bianca Perri</text>
<text x="1537" y="50" font-size="17" font-weight="700" fill="#29abe2" textLength="19" lengthAdjust="spacingAndGlyphs">21</text>
<text class="a" x="1611" y="32.500" textLength="55" lengthAdjust="spacingAndGlyphs">Attend Yes:</text><text class="ab" x="1670" y="32.500" textLength="6" lengthAdjust="spacingAndGlyphs">9</text>
<text class="a" x="1611" y="56.500" textLength="52" lengthAdjust="spacingAndGlyphs">Attend No:</text><text class="ab" x="1667" y="56.500" textLength="4.500" lengthAdjust="spacingAndGlyphs">1</text></g>
</svg>
</body>
</html>
